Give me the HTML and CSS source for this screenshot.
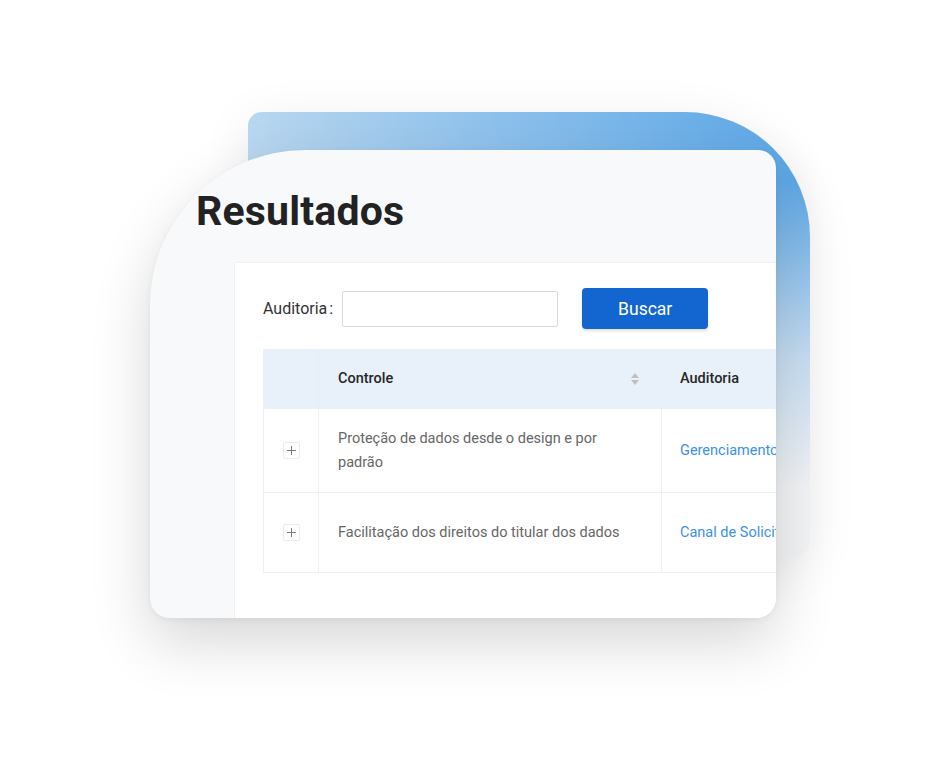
FILE: index.html
```html
<!DOCTYPE html>
<html lang="pt">
<head>
<meta charset="utf-8">
<title>Resultados</title>
<link rel="stylesheet" href="styles.css">
</head>
<body>
<div class="stage">
  <div class="back-card"></div>
  <div class="front-card">
    <h1 class="title">Resultados</h1>
    <div class="panel">
      <div class="search-row">
        <label class="label">Auditoria<span class="colon">:</span></label>
        <input class="input" type="text">
        <button class="btn">Buscar</button>
      </div>
      <div class="table">
        <div class="row head">
          <div class="cell c1"></div>
          <div class="cell c2"><span>Controle</span>
            <svg class="sort" width="10" height="16" viewBox="0 0 10 16"><path d="M5 2 L9 7 L1 7 Z" fill="#bfbfbf"/><path d="M1 9 L9 9 L5 14 Z" fill="#bfbfbf"/></svg>
          </div>
          <div class="cell c3">Auditoria</div>
        </div>
        <div class="row r1">
          <div class="cell c1"><span class="plus"></span></div>
          <div class="cell c2">Proteção de dados desde o design e por padrão</div>
          <div class="cell c3"><a class="link">Gerenciamento de Privacidade</a></div>
        </div>
        <div class="row r2">
          <div class="cell c1"><span class="plus"></span></div>
          <div class="cell c2">Facilitação dos direitos do titular dos dados</div>
          <div class="cell c3"><a class="link">Canal de Solicitações</a></div>
        </div>
      </div>
    </div>
  </div>
</div>
</body>
</html>
```

FILE: styles.css
```css
* { box-sizing: border-box; }
html, body { margin: 0; padding: 0; background: #ffffff; }
body { width: 926px; height: 768px; overflow: hidden; font-family: Roboto, "Liberation Sans", sans-serif; }

.stage {
  display: grid;
  width: 926px;
  height: 768px;
}
.back-card, .front-card { grid-area: 1 / 1; align-self: start; justify-self: start; }

.back-card {
  margin-left: 248px;
  margin-top: 112px;
  width: 562px;
  height: 445px;
  border-radius: 14px 125px 16px 0;
  background:
    linear-gradient(to bottom, rgba(243,244,246,0) 15%, rgba(243,244,246,0.7) 55%, rgba(243,244,246,1) 85%),
    linear-gradient(to right, #b9d7ef 0%, #8cc0ec 45%, #5aa6e6 100%);
  box-shadow: 0 10px 50px rgba(0,0,0,0.08);
}

.front-card {
  margin-left: 150px;
  margin-top: 150px;
  width: 626px;
  height: 468px;
  border-radius: 155px 18px 20px 20px;
  background: #f7f9fb;
  overflow: hidden;
  box-shadow: 0 24px 60px rgba(0,0,0,0.16), 0 2px 6px rgba(0,0,0,0.05);
  display: flex;
  flex-direction: column;
}

.title {
  margin: 37px 0 0 46px;
  font-size: 41px;
  line-height: 48px;
  font-weight: 700;
  color: #222222;
  letter-spacing: 0.2px;
}

.panel {
  margin: 27px 0 0 84px;
  flex: 1;
  background: #ffffff;
  border-left: 1px solid #eef0f3;
  border-top: 1px solid #f0f2f4;
  padding: 25px 0 0 28px;
  width: 700px;
}

.search-row {
  display: flex;
  align-items: center;
  height: 41px;
}
.label {
  font-size: 16px;
  color: #333333;
  margin-right: 9px;
}
.colon { margin-left: 2px; }
.input {
  width: 216px;
  height: 36px;
  border: 1px solid #d9d9d9;
  border-radius: 2px;
  background: #fff;
  margin: 0;
}
.btn {
  margin-left: 24px;
  width: 126px;
  height: 41px;
  border: none;
  border-radius: 4px;
  background: #1366d0;
  color: #ffffff;
  font-family: Roboto, "Liberation Sans", sans-serif;
  font-size: 17.5px;
  box-shadow: 0 2px 3px rgba(0,0,0,0.12);
}

.table {
  margin-top: 20px;
  width: 640px;
  border-left: 1px solid #f0f0f0;
}
.row {
  display: flex;
  border-bottom: 1px solid #f0f0f0;
}
.row.head { height: 60px; background: #e8f1fa; border-bottom: none; }
.row.r1 { height: 84px; }
.row.r2 { height: 80px; }
.cell {
  display: flex;
  align-items: center;
  font-size: 14.5px;
  line-height: 24px;
  color: #666666;
}
.c1 { width: 55px; justify-content: center; border-right: 1px solid #f0f0f0; }
.c2 { width: 343px; padding: 0 20px 0 19px; border-right: 1px solid #f0f0f0; }
.c3 { flex: 1; padding-left: 18px; white-space: nowrap; }
.head .cell { color: #262626; font-weight: 500; border-right-color: #e8f1fa; }
.head .c2 { justify-content: space-between; padding-right: 21px; }
.head .c1 { border-right: 1px solid #e3edf7; }
.r1 .c2 { padding-right: 50px; }

.plus {
  width: 17px;
  height: 17px;
  border: 1px solid #ececec;
  border-radius: 2px;
  background:
    linear-gradient(#7a7a7a, #7a7a7a) center / 9px 1px no-repeat,
    linear-gradient(#7a7a7a, #7a7a7a) center / 1px 9px no-repeat;
}
.link { color: #3d8fe8; text-decoration: none; }
```
